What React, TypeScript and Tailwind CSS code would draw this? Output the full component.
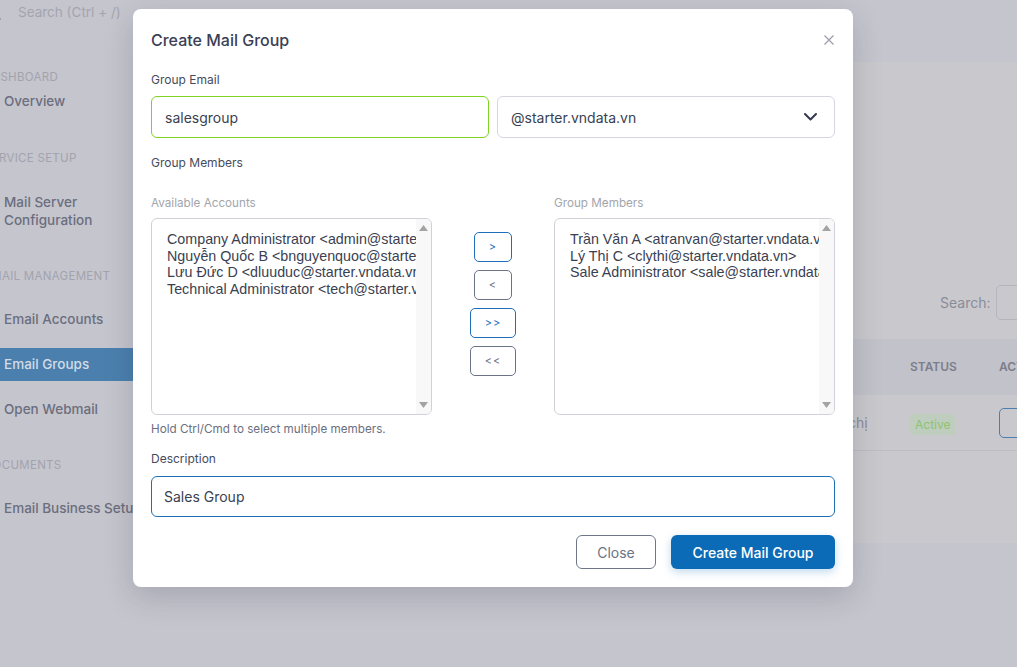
import { Search } from 'lucide-react'

const available = [
  'Company Administrator <admin@starter.vndata.vn>',
  'Nguyễn Quốc B <bnguyenquoc@starter.vndata.vn>',
  'Lưu Đức D <dluuduc@starter.vndata.vn>',
  'Technical Administrator <tech@starter.vndata.vn>',
]

const members = [
  'Trần Văn A <atranvan@starter.vndata.vn>',
  'Lý Thị C <clythi@starter.vndata.vn>',
  'Sale Administrator <sale@starter.vndata.vn>',
]

function ListBox({ items }: { items: string[] }) {
  return (
    <div className="flex h-[197px] w-[281px] overflow-hidden rounded-[6px] border border-[#cfd2d8] bg-white">
      <div className="min-w-0 flex-1 overflow-hidden pl-[15px] pt-[12px] font-['Liberation_Sans',Arial,sans-serif]">
        {items.map((t) => (
          <div key={t} className="whitespace-nowrap text-[14.3px] leading-[16.7px] text-[#3a3f51]">
            {t}
          </div>
        ))}
      </div>
      <div className="flex w-[15px] flex-col items-center justify-between bg-[#f8f8f8] py-[6px]">
        <svg width="9" height="6" viewBox="0 0 9 6"><path d="M0 6 L4.5 0 L9 6 Z" fill="#a3a3a3" /></svg>
        <svg width="9" height="6" viewBox="0 0 9 6"><path d="M0 0 L4.5 6 L9 0 Z" fill="#a3a3a3" /></svg>
      </div>
    </div>
  )
}

function MoveBtn({ label, wide, blue }: { label: string; wide?: boolean; blue?: boolean }) {
  return (
    <button
      className={`flex h-[30px] items-center justify-center rounded-[5px] border bg-white text-[11px] tracking-[1px] ${wide ? 'w-[46px]' : 'w-[38px]'} ${blue ? 'border-[#1f6fb8] text-[#1f6fb8]' : 'border-[#6b7386] text-[#6b7386]'}`}
    >
      {label}
    </button>
  )
}

function SideLabel({ text, mt }: { text: string; mt: string }) {
  return (
    <div className={`${mt} ml-[-16px] h-[16px] whitespace-nowrap text-[11.5px] leading-[16px] tracking-[0.3px] text-[#a2a3ad]`}>
      {text}
    </div>
  )
}

function SideItem({ text, mt, active }: { text: string; mt: string; active?: boolean }) {
  return (
    <div
      className={`${mt} flex h-[33px] items-center whitespace-nowrap pl-[4px] text-[13.5px] font-medium ${active ? 'bg-[#4b80ae] text-[#d3dce6]' : 'text-[#6b6e7d]'}`}
    >
      {text}
    </div>
  )
}

export default function App() {
  return (
    <div className="relative h-[667px] w-full overflow-hidden bg-[#c5c5ce] font-['Inter',sans-serif]">
      {/* page behind the overlay */}
      <div className="flex h-[62px] items-start pt-[3px]">
        <Search size={16} strokeWidth={2} className="ml-[-14px] mt-[2px] text-[#6b6e7d]" />
        <span className="ml-[16px] text-[13.5px] leading-[18px] text-[#a3a4ae]">Search (Ctrl + /)</span>
      </div>
      <div className="flex">
        <div className="w-[133px] shrink-0">
          <SideLabel text="DASHBOARD" mt="mt-[7px]" />
          <SideItem text="Overview" mt="mt-0" />
          <SideLabel text="SERVICE SETUP" mt="mt-[32px]" />
          <div className="mt-[20px] py-[7px] pl-[4px] text-[13.5px] font-medium leading-[18px] text-[#6b6e7d]">
            Mail Server
            <br />
            Configuration
          </div>
          <SideLabel text="EMAIL MANAGEMENT" mt="mt-[32px]" />
          <SideItem text="Email Accounts" mt="mt-[19px]" />
          <SideItem text="Email Groups" mt="mt-[12px]" active />
          <SideItem text="Open Webmail" mt="mt-[12px]" />
          <SideLabel text="DOCUMENTS" mt="mt-[31px]" />
          <SideItem text="Email Business Setup" mt="mt-[19px]" />
        </div>
        <div className="ml-[17px] h-[481px] w-[1000px] shrink-0 bg-[#c9c9cd]">
          <div className="mt-[223px] flex items-center pl-[790px]">
            <span className="text-[14px] text-[#8a8c99]">Search:</span>
            <div className="ml-[5px] h-[35px] w-[150px] rounded-[5px] border border-[#b4b6bf]" />
          </div>
          <div className="mt-[19px] flex h-[56px] items-center bg-[#c2c2ca] text-[12px] font-semibold text-[#7c7e8a]">
            <div className="w-[760px]" />
            <div className="w-[89px]">STATUS</div>
            <div>ACTIONS</div>
          </div>
          <div className="flex h-[56px] items-center border-b border-[#bdbdc4]">
            <div className="w-[690px]" />
            <div className="w-[70px] pl-[8px] text-[14px] text-[#8b8d99]">chị</div>
            <div className="w-[89px]">
              <span className="rounded-[3px] bg-[#bfcdbf] px-[5px] py-[3px] text-[12px] text-[#8cc46e]">Active</span>
            </div>
            <div className="h-[30px] w-[40px] rounded-[5px] border border-[#4a7fb0]" />
          </div>
        </div>
      </div>

      {/* modal */}
      <div className="absolute left-[133px] top-[9px] h-[578px] w-[720px] rounded-[8px] bg-white px-[18px] shadow-[0_10px_30px_rgba(30,30,50,0.18)]">
        <div className="flex h-[62px] items-center justify-between">
          <h2 className="text-[16px] font-medium text-[#3a4056]">Create Mail Group</h2>
          <svg width="10" height="10" viewBox="0 0 10 10" className="mr-[1px]">
            <path d="M0.5 0.5 L9.5 9.5 M9.5 0.5 L0.5 9.5" stroke="#9a9eaa" strokeWidth="1.2" />
          </svg>
        </div>

        <div className="h-[18px] text-[12px] leading-[18px] text-[#454b5c]">Group Email</div>
        <div className="mt-[7px] grid grid-cols-2 gap-[8px]">
          <div className="flex h-[42px] items-center rounded-[6px] border border-[#7ed321] pl-[13px] text-[14px] text-[#3a3f51]">
            salesgroup
          </div>
          <div className="flex h-[42px] items-center justify-between rounded-[6px] border border-[#d4d7de] pl-[13px] pr-[17px] text-[14px] text-[#3a3f51]">
            @starter.vndata.vn
            <svg width="13" height="8" viewBox="0 0 13 8">
              <path d="M1 1 L6.5 6.5 L12 1" fill="none" stroke="#343a4a" strokeWidth="2" strokeLinecap="round" strokeLinejoin="round" />
            </svg>
          </div>
        </div>

        <div className="mt-[16px] h-[18px] text-[12px] leading-[18px] text-[#454b5c]">Group Members</div>

        <div className="mt-[22px] flex">
          <div>
            <div className="h-[18px] text-[11.7px] leading-[18px] text-[#a3a6ad]">Available Accounts</div>
            <div className="mt-[6px]">
              <ListBox items={available} />
            </div>
          </div>
          <div className="flex w-[122px] flex-col items-center gap-[8px] pt-[38px]">
            <MoveBtn label=">" blue />
            <MoveBtn label="<" />
            <MoveBtn label=">>" wide blue />
            <MoveBtn label="<<" wide />
          </div>
          <div>
            <div className="h-[18px] text-[11.7px] leading-[18px] text-[#a3a6ad]">Group Members</div>
            <div className="mt-[6px]">
              <ListBox items={members} />
            </div>
          </div>
        </div>

        <div className="mt-[6px] h-[16px] text-[11.7px] leading-[16px] text-[#6b7080]">Hold Ctrl/Cmd to select multiple members.</div>

        <div className="mt-[13px] h-[18px] text-[12px] leading-[18px] text-[#454b5c]">Description</div>
        <div className="mt-[8px] flex h-[41px] items-center rounded-[6px] border border-[#1d6fb3] pl-[12px] text-[14px] text-[#3a3f51]">
          Sales Group
        </div>

        <div className="mt-[18px] flex justify-end gap-[15px]">
          <button className="h-[34px] w-[80px] rounded-[6px] border border-[#6f7687] bg-white text-[14px] text-[#6c7385]">
            Close
          </button>
          <button className="h-[34px] w-[164px] rounded-[6px] bg-[#0b6bb6] text-[14px] font-medium text-white shadow-[0_3px_8px_rgba(11,107,182,0.25)]">
            Create Mail Group
          </button>
        </div>
      </div>
    </div>
  )
}
